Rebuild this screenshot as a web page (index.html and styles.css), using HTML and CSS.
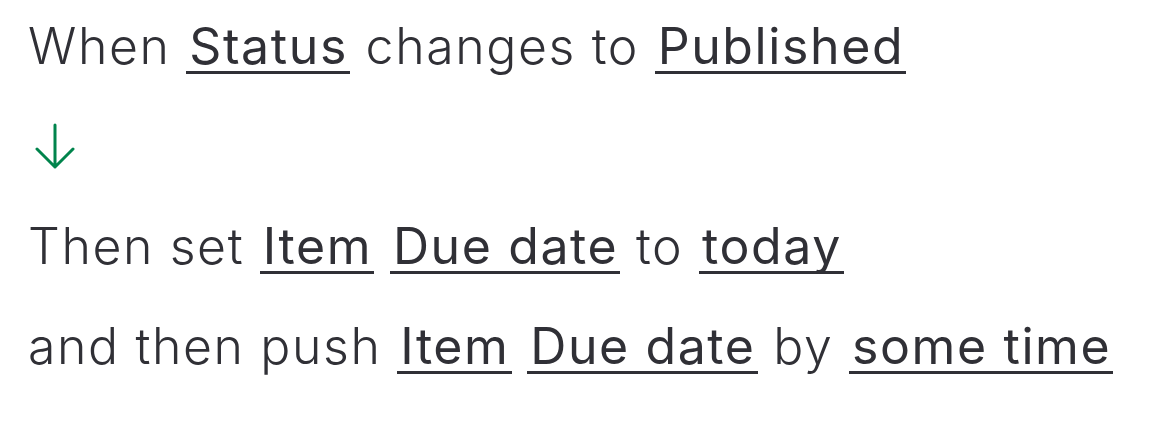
FILE: index.html
```html
<!DOCTYPE html>
<html lang="en">
<head>
<meta charset="utf-8">
<title>Automation rule</title>
<link rel="stylesheet" href="styles.css">
</head>
<body>
<div class="rule">
  <div class="line">When <span class="token">Status</span> changes to <span class="token">Published</span></div>
  <div class="arrow-row">
    <svg class="arrow" width="40" height="46" viewBox="0 0 40 46" aria-hidden="true">
      <path d="M20 2 V44 M2 26 L20 44 L38 26" fill="none" stroke="#00844c" stroke-width="3" stroke-linecap="round" stroke-linejoin="round"/>
    </svg>
  </div>
  <div class="line">Then set <span class="token">Item</span> <span class="token">Due date</span> to <span class="token">today</span></div>
  <div class="line">and then push <span class="token">Item</span> <span class="token">Due date</span> by <span class="token">some time</span></div>
</div>
</body>
</html>
```
FILE: styles.css
```css
html, body {
  margin: 0;
  padding: 0;
  background: #ffffff;
}

body {
  font-family: Inter, "Noto Sans", sans-serif;
  color: #303036;
}

.rule {
  display: flex;
  flex-direction: column;
  gap: 40px;
  padding: 16px 0 0 28px;
}

.line {
  font-size: 50px;
  font-weight: 300;
  letter-spacing: 1.6px;
  line-height: 60px;
  white-space: nowrap;
}

.token {
  display: inline-block;
  font-weight: 400;
  line-height: 1;
  padding: 0 2px 0 3px;
  border-bottom: 3px solid #303036;
}

.arrow-row {
  height: 60px;
  display: flex;
  align-items: center;
}

.arrow {
  display: block;
  margin-left: 7px;
}
```
